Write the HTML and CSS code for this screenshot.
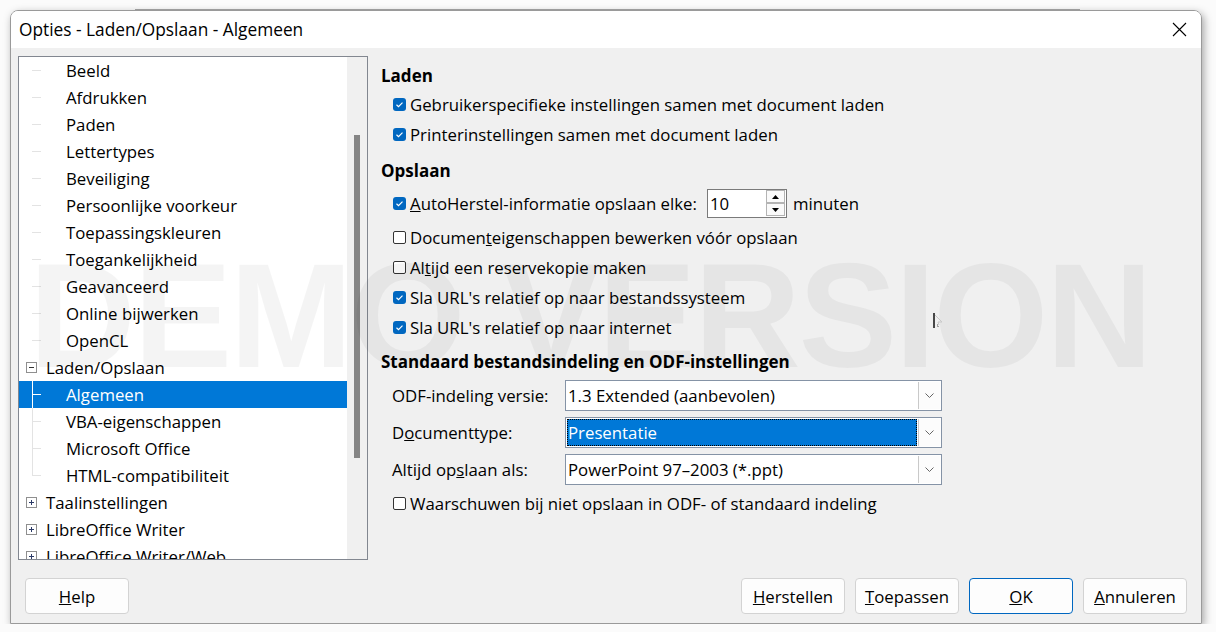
FILE: index.html
```html
<!DOCTYPE html>
<html lang="nl">
  <head>
    <meta charset="UTF-8" />
    <meta name="viewport" content="width=device-width, initial-scale=1.0" />
    <title>Opties - Laden/Opslaan - Algemeen</title>
    <link rel="stylesheet" href="styles.css">
  </head>
  <body>
    <div class="behind"></div>
    <div class="dialog">
      <div class="titlebar">
        <span class="title">Opties - Laden/Opslaan - Algemeen</span>
        <svg class="close" width="15" height="15" viewBox="0 0 15 15">
          <path d="M1 1L14 14M14 1L1 14" stroke="#000" stroke-width="1.1" fill="none" />
        </svg>
      </div>

      <div class="dialog-body">
        <div class="main">
          <div class="tree">
            <div class="tree-list">
              <div class="row"><span class="guide"></span>Beeld</div>
              <div class="row"><span class="guide"></span>Afdrukken</div>
              <div class="row"><span class="guide"></span>Paden</div>
              <div class="row"><span class="guide"></span>Lettertypes</div>
              <div class="row"><span class="guide"></span>Beveiliging</div>
              <div class="row"><span class="guide"></span>Persoonlijke voorkeur</div>
              <div class="row"><span class="guide"></span>Toepassingskleuren</div>
              <div class="row"><span class="guide"></span>Toegankelijkheid</div>
              <div class="row"><span class="guide"></span>Geavanceerd</div>
              <div class="row"><span class="guide"></span>Online bijwerken</div>
              <div class="row"><span class="guide"></span>OpenCL</div>
              <div class="row">
                <svg class="twisty" width="11" height="11" viewBox="0 0 11 11">
                  <rect x="0.5" y="0.5" width="10" height="10" fill="#fff" stroke="#8f8f8f" />
                  <path d="M3 5.5H8" stroke="#333" />
                </svg>Laden/Opslaan
              </div>
              <div class="row selected"><span class="guide branch"></span>Algemeen</div>
              <div class="row"><span class="guide branch"></span>VBA-eigenschappen</div>
              <div class="row"><span class="guide branch"></span>Microsoft Office</div>
              <div class="row"><span class="guide branch last"></span>HTML-compatibiliteit</div>
              <div class="row">
                <svg class="twisty" width="11" height="11" viewBox="0 0 11 11">
                  <rect x="0.5" y="0.5" width="10" height="10" fill="#fff" stroke="#8f8f8f" />
                  <path d="M3 5.5H8M5.5 3V8" stroke="#2b3a67" />
                </svg>Taalinstellingen
              </div>
              <div class="row">
                <svg class="twisty" width="11" height="11" viewBox="0 0 11 11">
                  <rect x="0.5" y="0.5" width="10" height="10" fill="#fff" stroke="#8f8f8f" />
                  <path d="M3 5.5H8M5.5 3V8" stroke="#2b3a67" />
                </svg>LibreOffice Writer
              </div>
              <div class="row">
                <svg class="twisty" width="11" height="11" viewBox="0 0 11 11">
                  <rect x="0.5" y="0.5" width="10" height="10" fill="#fff" stroke="#8f8f8f" />
                  <path d="M3 5.5H8M5.5 3V8" stroke="#2b3a67" />
                </svg>LibreOffice Writer/Web
              </div>
            </div>
            <div class="scrollbar"><div class="thumb"></div></div>
          </div>

          <div class="page">
            <div class="heading heading-laden">Laden</div>
            <div class="option"><span class="check on"></span>Gebruikerspecifieke instellingen samen met document laden</div>
            <div class="option"><span class="check on"></span>Printerinstellingen samen met document laden</div>

            <div class="heading heading-opslaan">Opslaan</div>
            <div class="option option-spin">
              <span class="check on"></span><span><u>A</u>utoHerstel-informatie opslaan elke:</span>
              <div class="spin">
                <span class="spin-value">10</span>
                <div class="spin-buttons">
                  <span class="spin-btn"><svg width="7" height="4" viewBox="0 0 7 4"><path d="M0 4L3.5 0L7 4Z" fill="#000" /></svg></span>
                  <span class="spin-btn"><svg width="7" height="4" viewBox="0 0 7 4"><path d="M0 0L3.5 4L7 0Z" fill="#000" /></svg></span>
                </div>
              </div>
              <span class="unit">minuten</span>
            </div>
            <div class="option option-after-spin"><span class="check"></span><span>Documen<u>t</u>eigenschappen bewerken vóór opslaan</span></div>
            <div class="option"><span class="check"></span><span>Al<u>t</u>ijd een reservekopie maken</span></div>
            <div class="option"><span class="check on"></span>Sla URL's relatief op naar bestandssysteem</div>
            <div class="option"><span class="check on"></span>Sla URL's relatief op naar internet</div>

            <div class="heading heading-odf">Standaard bestandsindeling en ODF-instellingen</div>
            <div class="field">
              <span class="field-label">ODF-indeling versie:</span>
              <div class="combo">
                <span class="combo-text">1.3 Extended (aanbevolen)</span>
                <span class="combo-btn"><svg width="9" height="5" viewBox="0 0 9 5"><path d="M0.5 0.5L4.5 4.5L8.5 0.5" stroke="#666" fill="none" /></svg></span>
              </div>
            </div>
            <div class="field">
              <span class="field-label">D<u>o</u>cumenttype:</span>
              <div class="combo">
                <span class="combo-text selected">Presentatie</span>
                <span class="combo-btn"><svg width="9" height="5" viewBox="0 0 9 5"><path d="M0.5 0.5L4.5 4.5L8.5 0.5" stroke="#666" fill="none" /></svg></span>
              </div>
            </div>
            <div class="field field-last">
              <span class="field-label">Altijd op<u>s</u>laan als:</span>
              <div class="combo">
                <span class="combo-text">PowerPoint 97–2003 (*.ppt)</span>
                <span class="combo-btn"><svg width="9" height="5" viewBox="0 0 9 5"><path d="M0.5 0.5L4.5 4.5L8.5 0.5" stroke="#666" fill="none" /></svg></span>
              </div>
            </div>
            <div class="option option-last"><span class="check"></span>Waarschuwen bij niet opslaan in ODF- of standaard indeling</div>
          </div>
        </div>

        <div class="buttons">
          <button class="btn"><u>H</u>elp</button>
          <div class="btn-group">
            <button class="btn"><u>H</u>erstellen</button>
            <button class="btn"><u>T</u>oepassen</button>
            <button class="btn btn-default"><u>O</u>K</button>
            <button class="btn"><u>A</u>nnuleren</button>
          </div>
        </div>
      </div>

      <div class="watermark">DEMO VERSION</div>
      <svg class="cursor" width="12" height="18" viewBox="0 0 12 18">
        <path d="M2 0V15" stroke="#111" stroke-width="1.5" />
        <path d="M3 2L10 9L6 9L7 12" stroke="#c8c8c8" fill="none" />
        <path d="M5 12H7M6 13V15" stroke="#555" stroke-dasharray="1 1" />
      </svg>
    </div>
  </body>
</html>
```

FILE: styles.css
```css
body {
  margin: 0;
  padding-top: 9px;
  background-color: #fbfbfb;
  font-family: "Open Sans", "Noto Sans", sans-serif;
  font-size: 16.8px;
  color: #000;
}

.behind {
  margin-left: 135px;
  width: 945px;
  height: 1px;
  background: #a8a8a8;
}

.dialog {
  position: relative;
  box-sizing: border-box;
  margin-left: 10px;
  width: 1192px;
  height: 614px;
  border: 1px solid #9a9a9a;
  border-radius: 8px 8px 0 0;
  box-shadow: 2px 3px 8px rgba(0, 0, 0, 0.35);
  display: flex;
  flex-direction: column;
  overflow: hidden;
}

.titlebar {
  height: 37px;
  flex-shrink: 0;
  background: #fff;
  display: flex;
  align-items: center;
  justify-content: space-between;
  padding: 0 14px 0 8px;
}
.title {
  font-size: 17.3px;
}

.dialog-body {
  flex: 1;
  background: #f0f0f0;
  padding: 8px 14px 9px 7px;
  display: flex;
  flex-direction: column;
}

.main {
  display: flex;
  height: 504px;
}

/* tree */
.tree {
  box-sizing: border-box;
  width: 350px;
  height: 504px;
  border: 1px solid #828790;
  background: #fff;
  display: flex;
}
.tree-list {
  flex: 1;
  overflow: hidden;
}
.row {
  height: 27px;
  display: flex;
  align-items: center;
  white-space: nowrap;
}
.row .twisty {
  margin-left: 7px;
  margin-right: 9px;
  flex-shrink: 0;
}
.guide {
  width: 47px;
  height: 27px;
  flex-shrink: 0;
  background: linear-gradient(#e3e3e3, #e3e3e3) 13px 13px / 9px 1px no-repeat;
}
.guide.branch {
  background:
    linear-gradient(#e3e3e3, #e3e3e3) 13px 0 / 1px 100% no-repeat,
    linear-gradient(#e3e3e3, #e3e3e3) 13px 13px / 9px 1px no-repeat;
}
.guide.branch.last {
  background:
    linear-gradient(#e3e3e3, #e3e3e3) 13px 0 / 1px 14px no-repeat,
    linear-gradient(#e3e3e3, #e3e3e3) 13px 13px / 9px 1px no-repeat;
}
.row.selected {
  background: #0078d7;
  color: #fff;
}
.row.selected .guide {
  background:
    linear-gradient(#fff, #fff) 13px 0 / 1px 100% no-repeat,
    linear-gradient(#fff, #fff) 13px 13px / 9px 1px no-repeat;
}
.scrollbar {
  width: 20px;
  background: #f0f0f0;
}
.thumb {
  margin: 78px 0 0 7px;
  width: 6px;
  height: 323px;
  background: #858585;
}

/* right page */
.page {
  margin-left: 13px;
  padding-top: 9px;
  display: flex;
  flex-direction: column;
}
.heading {
  height: 22px;
  line-height: 22px;
  font-weight: bold;
  font-size: 17px;
}
.heading-laden { margin-bottom: 2px; }
.heading-opslaan { margin-top: 11px; margin-bottom: 4px; }
.heading-odf { margin-top: 9px; margin-bottom: 7px; }

.option {
  height: 30px;
  display: flex;
  align-items: center;
  padding-left: 12px;
  white-space: nowrap;
}
.option-spin { height: 34px; }
.option-after-spin { margin-top: 2px; }
.option-last { margin-top: 3px; }

.check {
  box-sizing: border-box;
  width: 13px;
  height: 13px;
  margin-right: 4px;
  border: 1px solid #333;
  border-radius: 2px;
  background: #fff;
  flex-shrink: 0;
}
.check.on {
  border: none;
  border-radius: 3px;
  background: #0067c0 url("data:image/svg+xml,%3Csvg xmlns='http://www.w3.org/2000/svg' width='13' height='13'%3E%3Cpath d='M3.5 6.8L5.5 8.6L9.5 4.6' stroke='white' stroke-width='1.2' fill='none'/%3E%3C/svg%3E") no-repeat;
}

.spin {
  box-sizing: border-box;
  margin-left: 10px;
  width: 80px;
  height: 29px;
  border: 1px solid #7a7a7a;
  background: #fff;
  display: flex;
  align-items: center;
  justify-content: space-between;
}
.spin-value {
  padding-left: 2px;
}
.spin-buttons {
  margin-right: 1px;
  display: flex;
  flex-direction: column;
}
.spin-btn {
  box-sizing: border-box;
  width: 19px;
  height: 13px;
  border: 1px solid #b4b4b4;
  background: #fafafa;
  display: flex;
  align-items: center;
  justify-content: center;
}
.unit {
  margin-left: 6px;
}

.field {
  height: 31px;
  display: flex;
  align-items: center;
  padding-left: 11px;
  margin-bottom: 6px;
}
.field-last { margin-bottom: 0; }
.field-label {
  width: 173px;
}
.combo {
  box-sizing: border-box;
  width: 377px;
  height: 31px;
  border: 1px solid #8593a6;
  background: #fff;
  display: flex;
}
.combo-text {
  flex: 1;
  display: flex;
  align-items: center;
  padding-left: 2px;
  white-space: nowrap;
}
.combo-text.selected {
  margin: 1px 0 1px 1px;
  padding-left: 1px;
  background: #0078d7;
  color: #fff;
  outline: 1px dotted #000;
  outline-offset: -1px;
}
.combo-btn {
  box-sizing: border-box;
  width: 22px;
  margin: 1px;
  border-left: 1px solid #c9c9c9;
  background: #fcfcfc;
  display: flex;
  align-items: center;
  justify-content: center;
}

/* buttons */
.buttons {
  margin-top: 18px;
  padding-left: 7px;
  display: flex;
  justify-content: space-between;
}
.btn-group {
  display: flex;
  gap: 10px;
}
.btn {
  box-sizing: border-box;
  width: 104px;
  height: 36px;
  border: 1px solid #d3d3d3;
  border-radius: 4px;
  background: #fdfdfd;
  font-family: inherit;
  font-size: 16.8px;
  color: #000;
  padding: 0;
}
.btn-default {
  border-color: #0067c0;
}

.watermark {
  position: absolute;
  left: 18px;
  top: 231px;
  font-family: "Liberation Sans", Arial, sans-serif;
  font-weight: bold;
  font-size: 148px;
  line-height: 148px;
  letter-spacing: -2.5px;
  color: rgba(0, 0, 0, 0.045);
  white-space: nowrap;
  pointer-events: none;
}
.cursor {
  position: absolute;
  left: 921px;
  top: 302px;
}
```
